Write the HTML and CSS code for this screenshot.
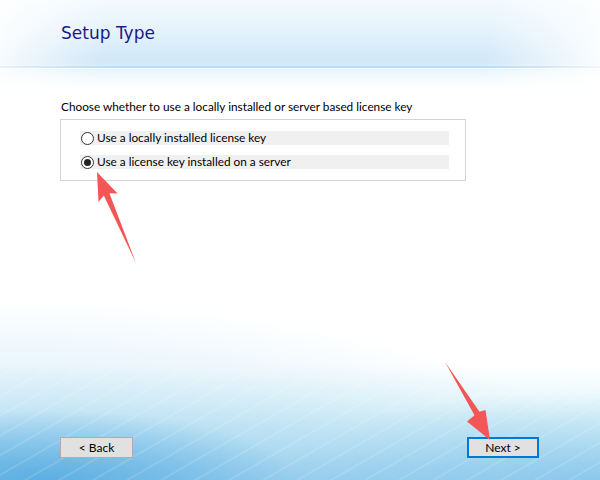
FILE: index.html
```html
<!DOCTYPE html>
<html lang="en">
<head>
    <meta charset="UTF-8">
    <meta name="viewport" content="width=device-width, initial-scale=1.0">
    <title>Setup Type</title>
    <link rel="stylesheet" href="styles.css">
</head>
<body>
    <div class="wizard">
        <div class="head">
            <h1>Setup Type</h1>
        </div>
        <div class="rule"></div>

        <div class="content">
            <p class="prompt">Choose whether to use a locally installed or server based license key</p>
            <div class="group">
                <label class="option">
                    <input type="radio" name="license" value="local">
                    <span class="dot"></span>
                    <span>Use a locally installed license key</span>
                </label>
                <label class="option">
                    <input type="radio" name="license" value="server" checked>
                    <span class="dot"></span>
                    <span>Use a license key installed on a server</span>
                </label>
            </div>
        </div>

        <div class="footer">
            <button class="btn">&lt; Back</button>
            <button class="btn default">Next &gt;</button>
        </div>

        <!-- annotation arrows -->
        <svg class="marks" width="600" height="480" viewBox="0 0 600 480">
            <polygon points="97,172 117.5,193.5 109.4,193.2 136,263 103.8,195.6 98.5,202" fill="#f45656"/>
            <polygon points="445,362 479.5,411.8 485.5,410 490,440 467,421.6 474.5,415.2" fill="#f45656"/>
        </svg>
    </div>
</body>
</html>
```

FILE: styles.css
```css
* {
    box-sizing: border-box;
}
body {
    margin: 0;
    font-family: Lato, 'Liberation Sans', Arial, sans-serif;
    font-size: 11.8px;
    color: #000;
}
.wizard {
    position: relative;
    width: 600px;
    height: 480px;
    overflow: hidden;
    display: flex;
    flex-direction: column;
    background:
        /* header wash */
        linear-gradient(to bottom, rgba(255,255,255,0) 0, rgba(255,255,255,0) 60px, #fff 95px),
        linear-gradient(100deg, rgba(255,255,255,0.9) 0, rgba(255,255,255,0) 18%, rgba(255,255,255,0) 80%, rgba(255,255,255,0.95) 100%),
        linear-gradient(to bottom, #f4fafe 0, #e2f1fb 35px, #cfe6f7 64px, #dcf1fc 70px, #fff 95px),
        /* bottom swooshes */
        repeating-linear-gradient(-30deg, rgba(255,255,255,0) 0, rgba(255,255,255,0) 14px, rgba(255,255,255,0.16) 15px, rgba(255,255,255,0) 17px),
        radial-gradient(ellipse 260px 70px at 40px 480px, rgba(80,168,224,0.8) 0, rgba(100,180,228,0) 100%),
        radial-gradient(ellipse 700px 260px at 0 560px, rgba(96,176,228,0.55) 0, rgba(120,190,232,0.25) 60%, rgba(120,190,232,0) 100%),
        radial-gradient(ellipse 320px 90px at 600px 480px, rgba(110,186,232,0.45) 0, rgba(110,186,232,0) 100%),
        linear-gradient(to bottom, #fff 0, #fff 365px, #eaf8fb 400px, #c6e7f5 445px, #a6d5f0 480px);
    background-size: 600px 100px, 600px 100px, 600px 100px, 600px 110px, 600px 480px, 600px 480px, 600px 480px, 600px 480px;
    background-position: 0 0, 0 0, 0 0, 0 370px, 0 0, 0 0, 0 0, 0 0;
    background-repeat: no-repeat;
}
.head {
    height: 66px;
    padding: 23px 0 0 61px;
}
h1 {
    margin: 0;
    font-family: Tahoma, 'DejaVu Sans', sans-serif;
    font-size: 17px;
    font-weight: normal;
    line-height: 20px;
    color: #1b1b85;
}
.rule {
    height: 2px;
    background: linear-gradient(to right, rgba(190,222,246,0.3), #b9dcf6 20%, #b9dcf6 80%, rgba(190,222,246,0.2));
    box-shadow: 0 1px 0 rgba(255,255,255,0.8);
}
.content {
    padding: 0 0 0 60px;
}
.prompt {
    margin: 31px 0 0 1px;
    line-height: 15px;
}
.group {
    width: 406px;
    margin-top: 5px;
    padding: 11px 16px 11px 19px;
    border: 1px solid #d3d3d3;
    display: flex;
    flex-direction: column;
    gap: 10px;
}
.option {
    display: flex;
    align-items: center;
    height: 14px;
    background: #f0f0f0;
    line-height: 14px;
}
.option input {
    display: none;
}
.dot {
    width: 13px;
    height: 13px;
    margin: 0 3px 0 1px;
    border: 1px solid #333;
    border-radius: 50%;
    background: #fff;
    flex: none;
    display: flex;
    align-items: center;
    justify-content: center;
}
.option input:checked + .dot::after {
    content: '';
    width: 7px;
    height: 7px;
    border-radius: 50%;
    background: #222;
}
.footer {
    margin-top: auto;
    padding: 0 61px 22px 60px;
    display: flex;
    justify-content: space-between;
}
.btn {
    width: 73px;
    height: 21px;
    padding: 0;
    background: #e1e1e1;
    border: 1px solid #adadad;
    font-family: inherit;
    font-size: 12px;
    color: #000;
}
.btn.default {
    width: 72px;
    border: 2px solid #0078d7;
}
.marks {
    position: absolute;
    left: 0;
    top: 0;
    pointer-events: none;
}
```
